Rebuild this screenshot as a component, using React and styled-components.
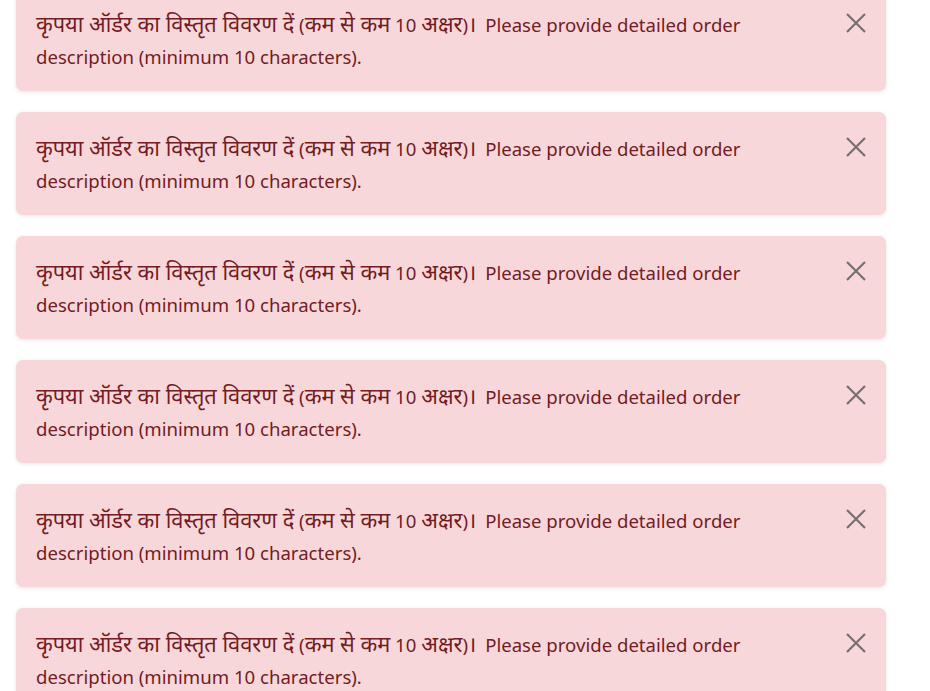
import React from "react";
import styled, { createGlobalStyle } from "styled-components";

const Global = createGlobalStyle`
  html, body { margin: 0; padding: 0; background: #ffffff; overflow: hidden; }
  body { font-family: "Noto Sans", "Noto Sans Devanagari", sans-serif; }
`;

const Stack = styled.div`
  display: flex;
  flex-direction: column;
  gap: 21px;
  padding: 0 44px 0 16px;
  margin-top: -12px;
`;

const Alert = styled.div`
  display: flex;
  align-items: flex-start;
  background: #f8d7da;
  color: #721c24;
  border-radius: 7px;
  box-shadow: 0 1px 4px rgba(0, 0, 0, 0.1);
  padding: 21px 20px 18px 20px;
  box-sizing: border-box;
  height: 103px;
`;

const Message = styled.div`
  flex: 1;
  max-width: 770px;
  font-size: 18.6px;
  line-height: 32px;
`;

const Hi = styled.span`
  font-family: "Noto Sans Devanagari", "Noto Sans", sans-serif;
  font-size: 21.8px;
  line-height: 1;
`;

const Gap = styled.span`
  margin-left: 4px;
`;

const Close = styled.button`
  margin-left: auto;
  margin-top: 4px;
  width: 20px;
  height: 20px;
  padding: 0;
  border: none;
  background: transparent;
  cursor: pointer;
  display: flex;
  align-items: center;
  justify-content: center;
`;

const CloseIcon = () => (
  <svg width="20" height="20" viewBox="0 0 20 20">
    <path d="M1 1 L19 19 M19 1 L1 19" stroke="#767072" strokeWidth="2.2" fill="none" />
  </svg>
);

export default function App() {
  return (
    <>
      <Global />
      <Stack>
        {Array.from({ length: 6 }).map((_, i) => (
          <Alert key={i} role="alert">
            <Message>
              <Hi>कृपया ऑर्डर का विस्तृत विवरण दें</Hi> (<Hi>कम से कम</Hi> 10 <Hi>अक्षर</Hi>)<Hi>।</Hi>{" "}
              <Gap>Please provide detailed order description (minimum 10 characters).</Gap>
            </Message>
            <Close aria-label="Close">
              <CloseIcon />
            </Close>
          </Alert>
        ))}
      </Stack>
    </>
  );
}
